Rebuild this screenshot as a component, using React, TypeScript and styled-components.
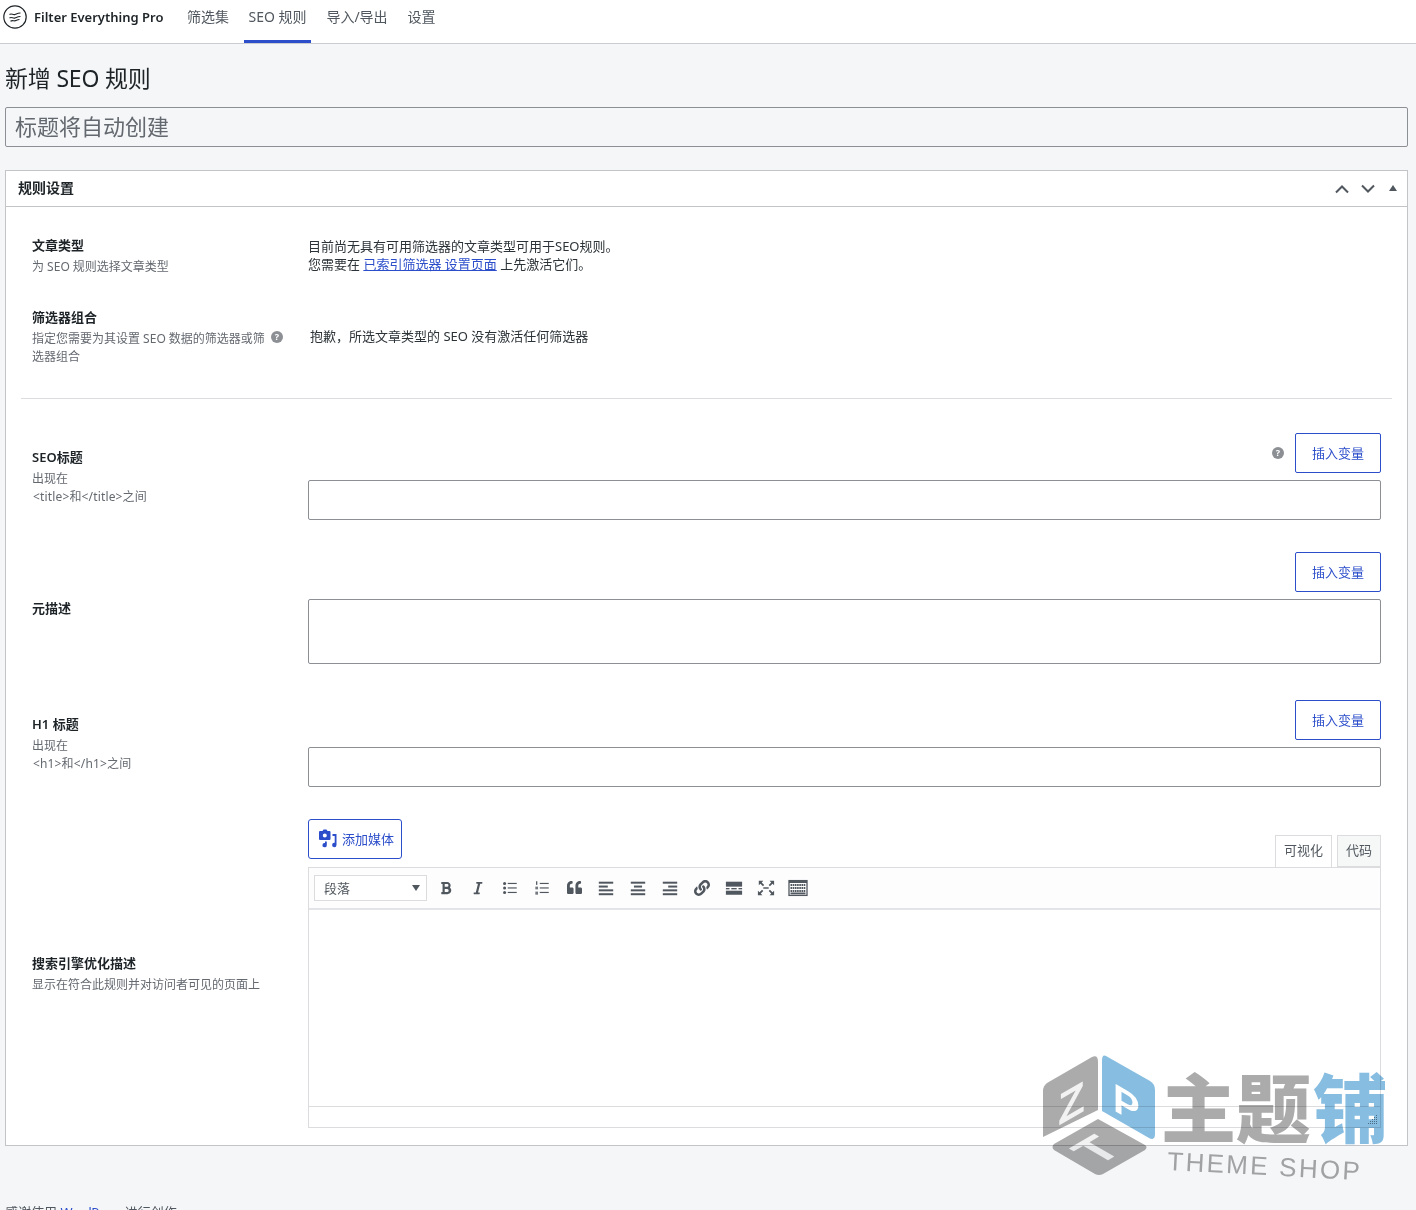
import React from "react";
import styled, { createGlobalStyle } from "styled-components";
import { FaBold, FaItalic, FaLink, FaQuoteLeft } from "react-icons/fa";

const Global = createGlobalStyle`
  html, body { margin: 0; padding: 0; background: #f5f6f8; }
  * { box-sizing: border-box; }
  body { font-family: "Noto Sans", "Noto Sans CJK SC", sans-serif; font-size: 13px; color: #2c3338; }
`;

const Page = styled.div`
  position: relative;
  width: 1416px;
  height: 1210px;
  overflow: hidden;
  background: #f5f6f8;
`;
const TopBar = styled.header`
  height: 44px;
  background: #fff;
  border-bottom: 1px solid #c9ccd1;
  display: flex;
  align-items: stretch;
  padding-left: 3px;
`;
const Brand = styled.div`
  display: flex;
  align-items: center;
  gap: 7px;
  height: 34px;
  font-size: 13px;
  font-weight: 600;
  color: #1d2327;
  width: 169px;
  white-space: nowrap;
`;
const Tab = styled.a<{ $active?: boolean; $w: number }>`
  width: ${(p) => p.$w}px;
  height: 43px;
  font-size: 14px;
  line-height: 34px;
  color: #50575e;
  text-align: center;
  white-space: nowrap;
  border-bottom: 3px solid ${(p) => (p.$active ? "#2c4ecb" : "transparent")};
`;
const Main = styled.main`
  padding: 0 8px 0 5px;
`;
const Heading = styled.h1`
  margin: 0;
  padding: 17px 0 12px;
  font-size: 23px;
  line-height: 34px;
  font-weight: 400;
  color: #1d2327;
  letter-spacing: -0.2px;
`;
const TitleBox = styled.div`
  height: 40px;
  border: 1px solid #8c8f94;
  border-radius: 2px;
  padding-left: 9px;
  font-size: 22px;
  line-height: 36px;
  color: #646970;
  background: #f5f6f8;
`;
const Panel = styled.section`
  margin-top: 23px;
  height: 976px;
  background: #fff;
  border: 1px solid #c3c4c7;
`;
const PanelHead = styled.div`
  height: 36px;
  border-bottom: 1px solid #c3c4c7;
  display: flex;
  align-items: center;
  justify-content: space-between;
  padding: 0 9px 3px 12px;
  font-size: 14px;
  font-weight: 600;
  color: #1d2327;
`;
const HeadTools = styled.div`
  display: flex;
  align-items: center;
  gap: 10px;
  padding-top: 3px;
  margin-right: 1px;
`;
const Collapse = styled.svg`
  margin: 0 0 2px 3px;
`;
const PanelBody = styled.div`
  padding: 29px 15px 0;
`;
const Row = styled.div<{ $mt?: number }>`
  display: grid;
  grid-template-columns: 276px 1073px;
  align-items: center;
  padding-left: 11px;
  margin-top: ${(p) => p.$mt ?? 0}px;
`;
const Label = styled.div`
  font-size: 13px;
  font-weight: 600;
  line-height: 18px;
  color: #1d2327;
`;
const Desc = styled.div`
  margin-top: 4px;
  font-size: 12px;
  line-height: 18px;
  color: #646970;
`;
const Tag = styled.span`
  letter-spacing: 0.15px;
  margin-left: 1px;
`;
const DescFlex = styled.div`
  display: flex;
  gap: 6px;
  align-items: flex-start;
`;
const DescText = styled(Desc)`
  width: 233px;
`;
const Help = styled.span<{ $mt?: number }>`
  flex: none;
  width: 12px;
  height: 12px;
  margin-top: ${(p) => p.$mt ?? 0}px;
  border-radius: 50%;
  background: #8c8f94;
  color: #fff;
  font-size: 9px;
  font-weight: 700;
  line-height: 12px;
  text-align: center;
`;
const Note = styled.div<{ $ml?: number }>`
  font-size: 13px;
  line-height: 18px;
  color: #2c3338;
  margin-left: ${(p) => p.$ml ?? 0}px;
  margin-top: -2px;
`;
const Anchor = styled.a`
  color: #2c4ecb;
  text-decoration: underline;
`;
const FooterLink = styled.span`
  color: #2c4ecb;
  letter-spacing: -0.5px;
`;
const Divider = styled.hr`
  margin: 32px 0 34px;
  border: 0;
  border-top: 1px solid #dcdcde;
`;
const Field = styled.div`
  display: flex;
  flex-direction: column;
  gap: 7px;
`;
const Actions = styled.div`
  display: flex;
  justify-content: flex-end;
  align-items: center;
  gap: 11px;
`;
const Outline = styled.button`
  height: 40px;
  width: 86px;
  background: #fff;
  border: 1px solid #2c4ecb;
  border-radius: 2px;
  color: #2c4ecb;
  font: inherit;
  font-size: 13px;
  padding: 0 0 2px;
`;
const TextBox = styled.div<{ $h: number }>`
  height: ${(p) => p.$h}px;
  background: #fff;
  border: 1px solid #8c8f94;
  border-radius: 2px;
`;
const MediaRow = styled.div`
  height: 48px;
  display: flex;
  justify-content: space-between;
  align-items: flex-start;
`;
const MediaBtn = styled.button`
  height: 40px;
  width: 94px;
  display: flex;
  align-items: center;
  gap: 4px;
  padding: 0 0 2px 9px;
  background: #fff;
  border: 1px solid #2c4ecb;
  border-radius: 3px;
  color: #2c4ecb;
  font: inherit;
  font-size: 13px;
`;
const ModeTabs = styled.div`
  align-self: flex-end;
  display: flex;
  gap: 5px;
`;
const ModeTab = styled.div<{ $on?: boolean; $w: number }>`
  width: ${(p) => p.$w}px;
  height: 32px;
  line-height: 28px;
  text-align: center;
  font-size: 13px;
  color: #50575e;
  border: 1px solid #dcdcde;
  border-bottom: ${(p) => (p.$on ? "0" : "1px solid #dcdcde")};
  background: ${(p) => (p.$on ? "#fff" : "#f6f7f7")};
`;
const Editor = styled.div`
  height: 261px;
  border: 1px solid #dcdcde;
  display: flex;
  flex-direction: column;
`;
const Toolbar = styled.div`
  height: 42px;
  flex: none;
  display: flex;
  align-items: center;
  padding: 0 0 1px 5px;
  border-bottom: 2px solid #e2e4e7;
  background: #fdfdfe;
`;
const Select = styled.div`
  width: 113px;
  height: 26px;
  border: 1px solid #dcdcde;
  background: #fff;
  padding: 0 0 0 9px;
  display: flex;
  align-items: center;
  justify-content: space-between;
  font-size: 13px;
  color: #50575e;
  margin-right: 3px;
`;
const Caret = styled.span`
  width: 0;
  height: 0;
  margin-right: 6px;
  border-left: 4px solid transparent;
  border-right: 4px solid transparent;
  border-top: 6px solid #50575e;
`;
const Tool = styled.span`
  width: 32px;
  height: 26px;
  display: flex;
  align-items: center;
  justify-content: center;
  color: #50575e;
`;
const EditArea = styled.div`
  flex: 1;
`;
const Status = styled.div`
  height: 21px;
  flex: none;
  border-top: 1px solid #dcdcde;
`;
const Footer = styled.footer`
  position: absolute;
  left: 5px;
  top: 1203px;
  font-size: 13px;
  line-height: 18px;
  color: #50575e;
`;
const Mark = styled.svg`
  position: absolute;
  left: 1000px;
  top: 1040px;
  mix-blend-mode: multiply;
  pointer-events: none;
`;
const Grip = styled.svg`
  position: absolute;
  left: 1368px;
  top: 1115px;
`;

const I = ({ children, w = 18, h = 18 }: { children: React.ReactNode; w?: number; h?: number }) => (
  <svg width={w} height={h} viewBox="0 0 20 20" fill="#50575e">{children}</svg>
);

const BulletIcon = () => (
  <I>
    <circle cx="4" cy="5" r="1.700" /><circle cx="4" cy="10" r="1.700" /><circle cx="4" cy="15" r="1.700" />
    <rect x="7.500" y="4.300" width="10" height="1.300" /><rect x="7.500" y="9.300" width="10" height="1.300" /><rect x="7.500" y="14.300" width="10" height="1.300" />
  </I>
);
const NumberIcon = () => (
  <I>
    <rect x="3.400" y="2.500" width="1.400" height="4" /><rect x="2.600" y="8.500" width="3" height="3" opacity=".8" /><rect x="2.600" y="14" width="3" height="3.400" opacity=".8" />
    <rect x="7.500" y="4.300" width="10" height="1.300" /><rect x="7.500" y="9.300" width="10" height="1.300" /><rect x="7.500" y="14.300" width="10" height="1.300" />
  </I>
);
const AlignIcon = ({ kind }: { kind: "l" | "c" | "r" }) => {
  const short = kind === "l" ? 2 : kind === "c" ? 5.500 : 8;
  const w = kind === "c" ? 9 : 10;
  return (
    <I>
      <rect x="2" y="3" width="16" height="2.200" />
      <rect x={short} y="7.300" width={w} height="2.200" />
      <rect x="2" y="11.500" width="16" height="2.200" />
      <rect x="2" y="15.800" width="16" height="2.200" />
    </I>
  );
};
const MoreIcon = () => (
  <I>
    <rect x="1" y="3" width="18" height="5.500" />
    <rect x="1" y="10" width="4" height="1.500" /><rect x="7" y="10" width="6" height="1.500" /><rect x="15" y="10" width="4" height="1.500" />
    <rect x="1" y="13" width="18" height="4.500" />
  </I>
);
const FullIcon = () => (
  <I>
    <path d="M1 2h6L5.200 3.800 8 6.600 6.600 8 3.800 5.200 2 7V2zM19 2v5l-1.800-1.800L14.400 8 13 6.600l2.800-2.800L14 2h5zM1 18v-5l1.800 1.800L5.600 12 7 13.400l-2.800 2.800L6 18H1zM19 18h-5l1.800-1.800L13 13.400l1.400-1.400 2.800 2.800L19 13v5z" />
    <rect x="7" y="9.200" width="6" height="1.600" />
  </I>
);
const KeyIcon = () => (
  <svg width="20" height="18" viewBox="0 0 20 18">
    <rect x="1" y="1.600" width="18" height="14.800" fill="#fff" stroke="#50575e" strokeWidth="1.300" />
    <rect x="1" y="1.600" width="18" height="2.400" fill="#50575e" />
    {[6, 9, 12].map((y) => (
      <line key={y} x1="2.500" x2="17.500" y1={y} y2={y} stroke="#50575e" strokeWidth="1.800" strokeDasharray="1.600 .6" />
    ))}
    <rect x="2.500" y="13.500" width="15" height="1.800" fill="#50575e" />
  </svg>
);
const MediaIcon = () => (
  <svg width="20" height="20" viewBox="0 0 20 20" fill="#2c4ecb">
    <path fillRule="evenodd" d="M2 3h2.500l1-1.600h3L9.500 3H11.500a1 1 0 0 1 1 1v7a1 1 0 0 1-1 1H2a1 1 0 0 1-1-1V4a1 1 0 0 1 1-1zm4.800 2.500a2 2 0 1 0 0 4 2 2 0 0 0 0-4z" />
    <path d="M14.500 6h4v11a2.200 2.200 0 1 1-1.800-2.200V8h-2.200zM8.800 13.500v3.700a2.200 2.200 0 1 1-1.800-2.200v-1.500z" />
  </svg>
);

export default function App() {
  return (
    <Page>
      <Global />
      <TopBar>
        <Brand>
          <svg width="24" height="24" viewBox="0 0 24 24" fill="none" stroke="#1d2327">
            <circle cx="12" cy="12" r="11.200" strokeWidth="1.200" />
            <path d="M6.500 9.500c2-1.500 3.500 0.800 5.500 0s2.500-1.600 5.500-1.500M6.500 13c2-1.500 3.500 0.800 5.500 0s2.500-1.600 5.500-1.500M7.500 16.200c2-1.300 3-0.100 4.500-.4s2.300-1.300 4.500-1.300" strokeWidth="1.100" />
          </svg>
          Filter Everything Pro
        </Brand>
        <Tab $w={72}>筛选集</Tab>
        <Tab $w={67} $active>SEO 规则</Tab>
        <Tab $w={92}>导入/导出</Tab>
        <Tab $w={37}>设置</Tab>
      </TopBar>
      <Main>
        <Heading>新增 SEO 规则</Heading>
        <TitleBox>标题将自动创建</TitleBox>
        <Panel>
          <PanelHead>
            规则设置
            <HeadTools>
              <svg width="16" height="10" viewBox="0 0 16 10" fill="none" stroke="#50575e" strokeWidth="2"><path d="M2 8.500l6-6 6 6" /></svg>
              <svg width="16" height="10" viewBox="0 0 16 10" fill="none" stroke="#50575e" strokeWidth="2"><path d="M2 1.500l6 6 6-6" /></svg>
              <Collapse width="8" height="6" viewBox="0 0 8 6" fill="#50575e"><path d="M4 0l4 6H0z" /></Collapse>
            </HeadTools>
          </PanelHead>
          <PanelBody>
            <Row>
              <div>
                <Label>文章类型</Label>
                <Desc>为 SEO 规则选择文章类型</Desc>
              </div>
              <Note>
                目前尚无具有可用筛选器的文章类型可用于SEO规则。<br />
                您需要在 <Anchor>已索引筛选器 设置页面</Anchor> 上先激活它们。
              </Note>
            </Row>
            <Row $mt={32}>
              <div>
                <Label>筛选器组合</Label>
                <DescFlex>
                  <DescText>指定您需要为其设置 SEO 数据的筛选器或筛选器组合</DescText>
                  <Help $mt={5}>?</Help>
                </DescFlex>
              </div>
              <Note $ml={2}>抱歉，所选文章类型的 SEO 没有激活任何筛选器</Note>
            </Row>
            <Divider />
            <Row>
              <div>
                <Label>SEO标题</Label>
                <Desc>出现在<br /><Tag>&lt;title&gt;和&lt;/title&gt;之间</Tag></Desc>
              </div>
              <Field>
                <Actions><Help>?</Help><Outline>插入变量</Outline></Actions>
                <TextBox $h={40} />
              </Field>
            </Row>
            <Row $mt={32}>
              <Label>元描述</Label>
              <Field>
                <Actions><Outline>插入变量</Outline></Actions>
                <TextBox $h={65} />
              </Field>
            </Row>
            <Row $mt={36}>
              <div>
                <Label>H1 标题</Label>
                <Desc>出现在<br /><Tag>&lt;h1&gt;和&lt;/h1&gt;之间</Tag></Desc>
              </div>
              <Field>
                <Actions><Outline>插入变量</Outline></Actions>
                <TextBox $h={40} />
              </Field>
            </Row>
            <Row $mt={32}>
              <div>
                <Label>搜索引擎优化描述</Label>
                <Desc>显示在符合此规则并对访问者可见的页面上</Desc>
              </div>
              <div>
                <MediaRow>
                  <MediaBtn><MediaIcon />添加媒体</MediaBtn>
                  <ModeTabs>
                    <ModeTab $on $w={57}>可视化</ModeTab>
                    <ModeTab $w={44}>代码</ModeTab>
                  </ModeTabs>
                </MediaRow>
                <Editor>
                  <Toolbar>
                    <Select>段落<Caret /></Select>
                    <Tool><FaBold size={14} /></Tool>
                    <Tool><FaItalic size={14} /></Tool>
                    <Tool><BulletIcon /></Tool>
                    <Tool><NumberIcon /></Tool>
                    <Tool><FaQuoteLeft size={15} /></Tool>
                    <Tool><AlignIcon kind="l" /></Tool>
                    <Tool><AlignIcon kind="c" /></Tool>
                    <Tool><AlignIcon kind="r" /></Tool>
                    <Tool><FaLink size={16} /></Tool>
                    <Tool><MoreIcon /></Tool>
                    <Tool><FullIcon /></Tool>
                    <Tool><KeyIcon /></Tool>
                  </Toolbar>
                  <EditArea />
                  <Status />
                </Editor>
              </div>
            </Row>
          </PanelBody>
        </Panel>
      </Main>
      <Footer>感谢使用 <FooterLink>WordPress</FooterLink> 进行创作</Footer>
      <Grip width="10" height="10" viewBox="0 0 10 10" fill="#8c8f94">
        {[[8,0],[6,2],[8,2],[4,4],[6,4],[8,4],[2,6],[4,6],[6,6],[8,6],[0,8],[2,8],[4,8],[6,8],[8,8]].map(([x, y]) => (
          <rect key={`${x}-${y}`} x={x} y={y} width="1" height="1" />
        ))}
      </Grip>
      <Mark width="416" height="170" viewBox="0 0 416 170">
        <path d="M92 17 L47 43 Q43 46 43 51 L43 97 L98 70 L98 22 Q98 14 92 17Z" fill="#ababab" />
        <path d="M106 16 L150 41 Q155 44 155 50 L155 94 Q155 101 149 98 L102 71 L102 21 Q102 14 106 16Z" fill="#86bde0" />
        <path d="M98 79 L145 105 Q148 107 145 110 L103 134 Q99 136 95 134 L54 110 Q51 107 54 104Z" fill="#ababab" />
        <g fontFamily="'Liberation Sans', sans-serif" fontWeight="700" fill="#f2f2f2">
          <text transform="translate(58 86) skewY(-30)" fontSize="44">Z</text>
          <text transform="translate(113 70) skewY(30)" fontSize="40" fill="#ffffff">P</text>
          <text transform="matrix(0.86 -0.5 0.86 0.5 98 126)" fontSize="50">T</text>
        </g>
        <g fontFamily="'Noto Sans CJK SC', sans-serif" fontWeight="900">
          <text x="161" y="97" fontSize="75" fill="#ababab">主题</text>
          <text x="313" y="97" fontSize="75" fill="#86bde0">铺</text>
        </g>
        <text transform="translate(167 130) rotate(3)" fontFamily="'Liberation Sans', sans-serif" fontSize="26" letterSpacing="2.300" fill="#a8a8a8">THEME SHOP</text>
      </Mark>
    </Page>
  );
}
